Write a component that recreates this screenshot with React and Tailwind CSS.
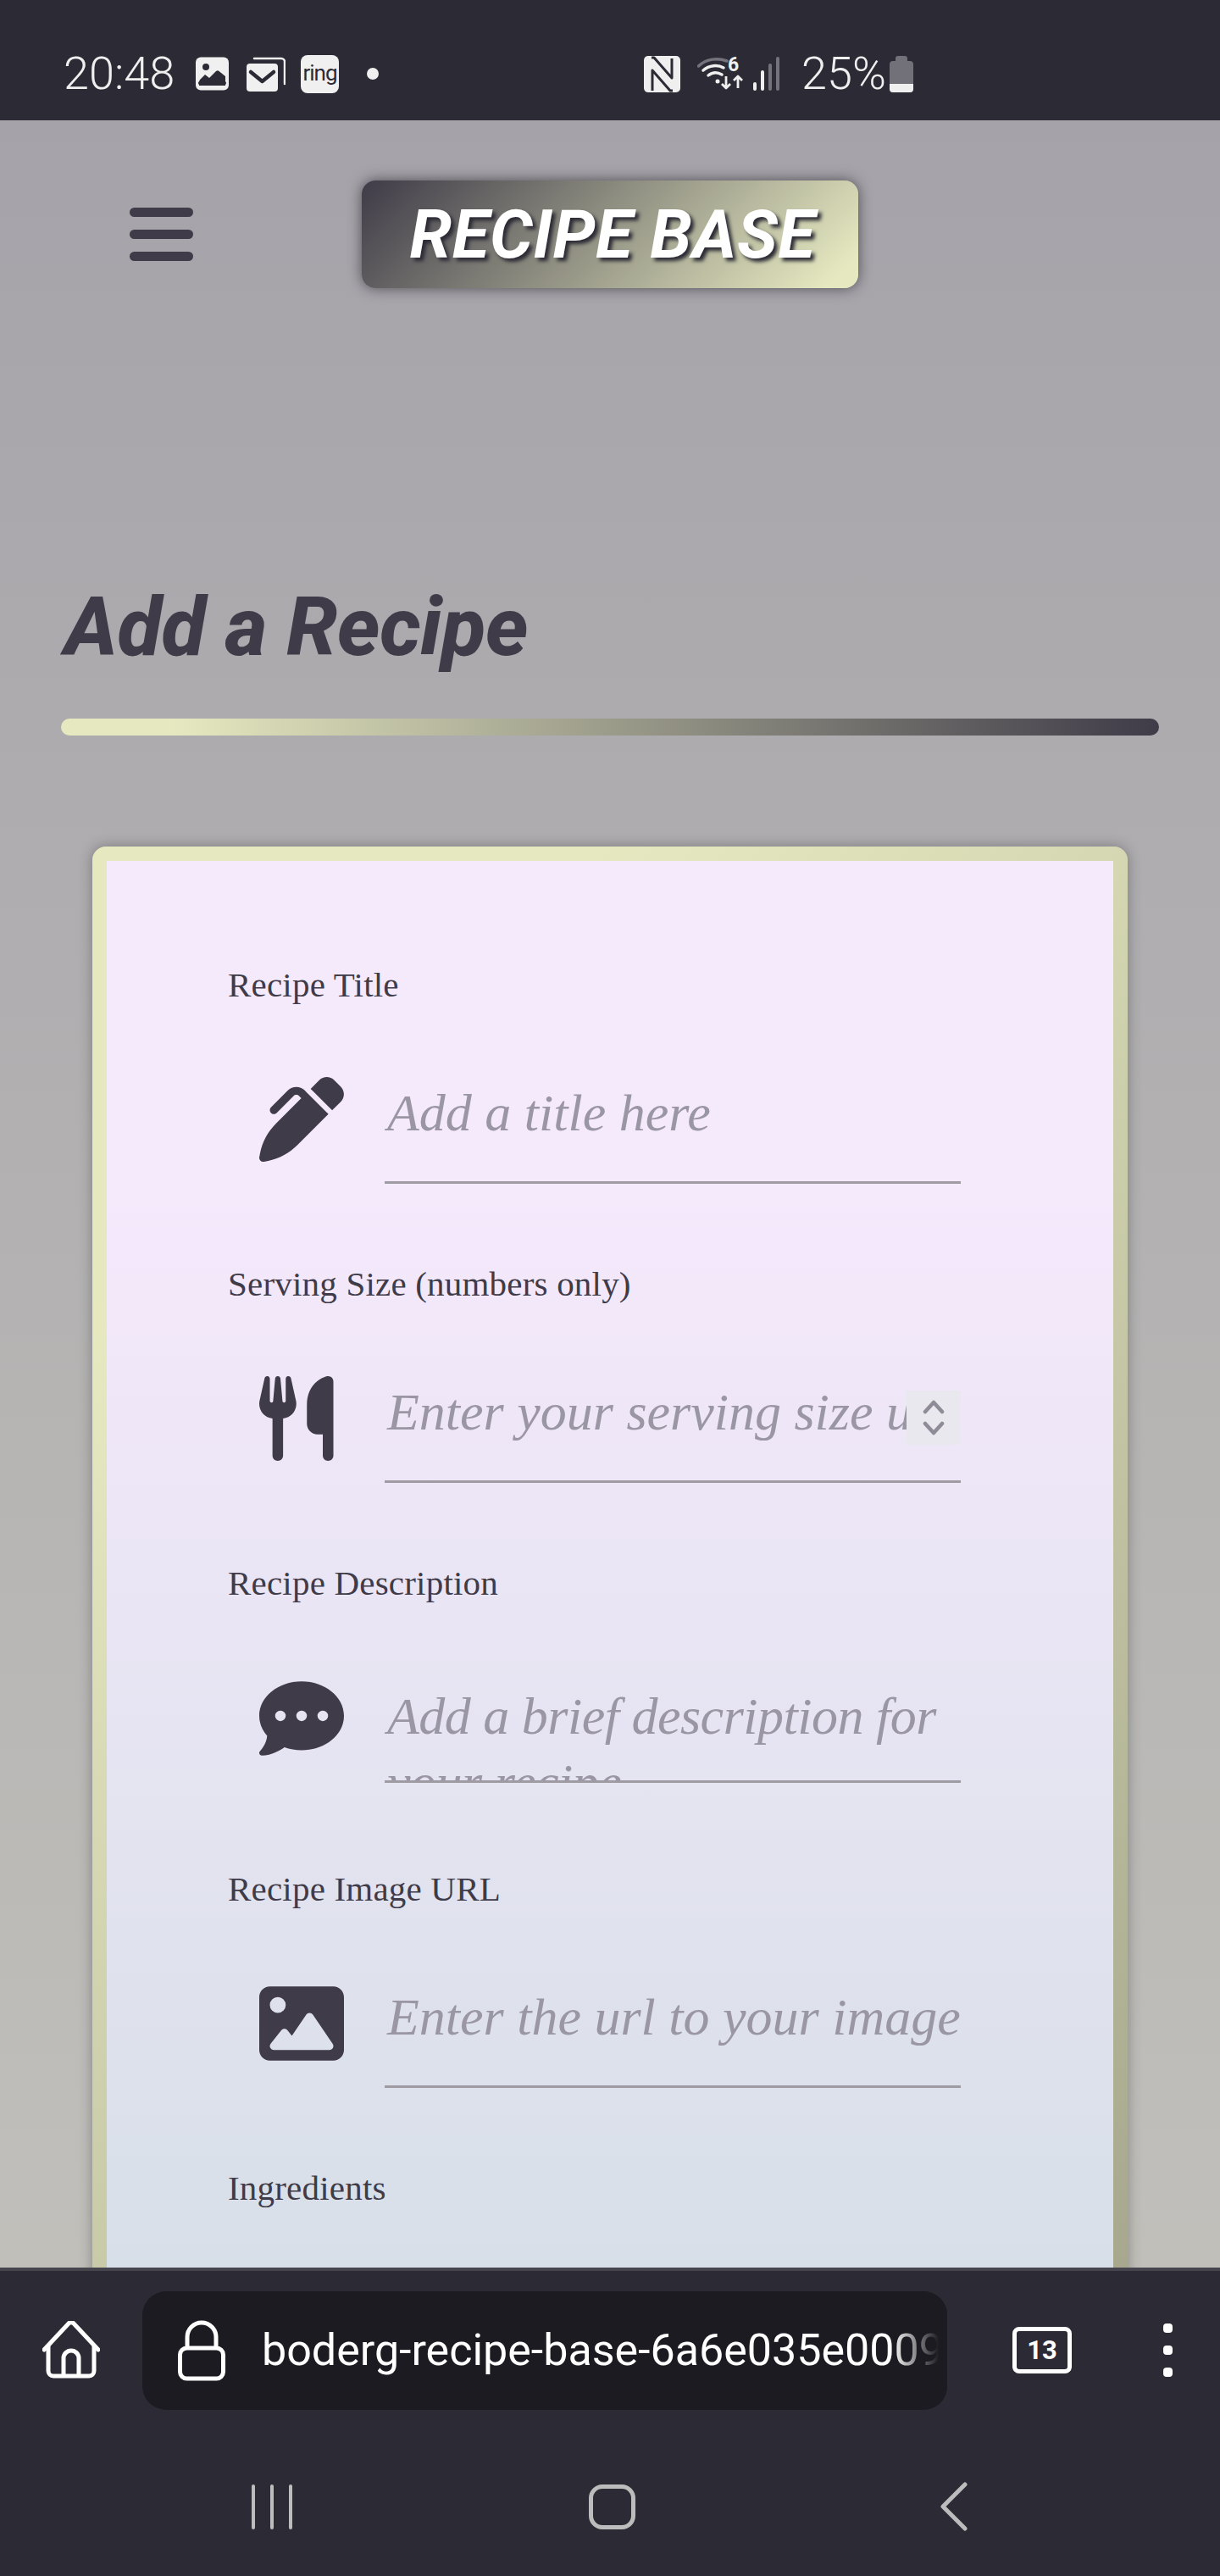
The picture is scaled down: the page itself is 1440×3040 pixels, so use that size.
import React from "react";
import { FaPenClip, FaUtensils, FaCommentDots, FaImage } from "react-icons/fa6";

const INK = "#3f3b48";

function ImageNote() {
  return (
    <svg width="40" height="40" viewBox="0 0 40 40" className="shrink-0">
      <rect width="39" height="39" y="0.5" rx="6" fill="#f0f0f0" />
      <circle cx="12" cy="12" r="4" fill="#2c2b35" />
      <path d="M4 33v-3c0-2 1-3 2-4l5-5 5 4 8-8c1.500-1 2.500-1 3.500 0L35 23v10z" fill="#2c2b35" />
      <rect x="4" y="31" width="31" height="3" fill="#2c2b35" />
      <path d="M5 31h29" stroke="#2c2b35" strokeWidth="4" strokeLinecap="round" />
    </svg>
  );
}

function MailNote() {
  return (
    <svg width="46" height="41" viewBox="0 0 46 41" className="shrink-0">
      <path d="M9 2h32a4 4 0 0 1 4 4v26" fill="none" stroke="#f0f0f0" strokeWidth="2.500" strokeLinecap="round" />
      <rect x="0" y="8" width="37" height="33" rx="4" fill="#f0f0f0" />
      <path d="M5 18l13.500 11L32 18" fill="none" stroke="#2c2b35" strokeWidth="4.500" strokeLinecap="round" strokeLinejoin="round" />
    </svg>
  );
}

function NfcIcon() {
  return (
    <svg width="43" height="43" viewBox="0 0 43 43" className="shrink-0">
      <rect width="43" height="43" rx="5" fill="#efefef" />
      <path d="M9 2h3l21 24V3" fill="none" stroke="#2c2b35" strokeWidth="3" strokeLinejoin="round" />
      <path d="M34 41h-3L10 17v24" fill="none" stroke="#2c2b35" strokeWidth="3" strokeLinejoin="round" />
    </svg>
  );
}

function WifiIcon() {
  return (
    <div className="relative w-[54px] h-[40px] shrink-0">
      <svg width="54" height="40" viewBox="0 0 54 40" className="absolute inset-0">
        <path d="M1.500 11C11 2 24 1 35 5" fill="none" stroke="#74737b" strokeWidth="3.500" strokeLinecap="round" />
        <path d="M7 16c7-6 17-7 24-3" fill="none" stroke="#efefef" strokeWidth="3.500" strokeLinecap="round" />
        <path d="M13 22c5-4 11-4 16-1" fill="none" stroke="#efefef" strokeWidth="3.500" strokeLinecap="round" />
        <circle cx="24" cy="29" r="2.500" fill="#efefef" />
        <path d="M34 23v14m-5-5l5 5 5-5" fill="none" stroke="#efefef" strokeWidth="2.800" strokeLinejoin="round" />
        <path d="M48 37V23m-5 5l5-5 5 5" fill="none" stroke="#efefef" strokeWidth="2.800" strokeLinejoin="round" />
      </svg>
      <span className="absolute left-[36px] top-[-3px] text-[23px] leading-[26px] font-bold text-[#efefef] font-['Roboto',sans-serif]">6</span>
    </div>
  );
}

function SignalIcon() {
  return (
    <div className="flex items-end gap-[5px] h-[40px] shrink-0">
      <div className="w-[4px] h-[10px] rounded-full bg-[#efefef]" />
      <div className="w-[4px] h-[24px] rounded-full bg-[#efefef]" />
      <div className="w-[4px] h-[32px] rounded-full bg-[#74737b]" />
      <div className="w-[4px] h-[40px] rounded-full bg-[#74737b]" />
    </div>
  );
}

function BatteryIcon() {
  return (
    <svg width="28" height="43" viewBox="0 0 28 43" className="shrink-0">
      <path d="M7 6V3a3 3 0 0 1 3-3h8a3 3 0 0 1 3 3v3h3a4 4 0 0 1 4 4v29a4 4 0 0 1-4 4H4a4 4 0 0 1-4-4V10a4 4 0 0 1 4-4z" fill="#72717a" />
      <path d="M0 33h28v6a4 4 0 0 1-4 4H4a4 4 0 0 1-4-4z" fill="#efefef" />
    </svg>
  );
}

function StatusBar() {
  return (
    <div className="h-[142px] shrink-0 bg-[#2c2b35] flex items-center pt-[32px] text-[#efefef] font-['Roboto',sans-serif] font-light">
      <div className="flex items-center pl-[75px]">
        <span className="text-[54px] leading-[60px] w-[156px]">20:48</span>
        <ImageNote />
        <div className="w-[20px]" />
        <MailNote />
        <div className="w-[18px]" />
        <div className="w-[45px] h-[45px] rounded-[8px] bg-[#f0f0f0] flex items-center justify-center text-[#2c2b35] text-[26px] leading-none font-normal tracking-[-1px] pb-[3px]">ring</div>
        <div className="w-[14px] h-[14px] rounded-full bg-[#f0f0f0] ml-[33px]" />
      </div>
      <div className="flex items-center ml-[313px]">
        <NfcIcon />
        <div className="w-[20px]" />
        <WifiIcon />
        <div className="w-[12px]" />
        <SignalIcon />
        <span className="text-[54px] leading-[60px] ml-[26px] w-[104px]">25%</span>
        <BatteryIcon />
      </div>
    </div>
  );
}

function Label({ children }) {
  return <div className="text-[41px] leading-[48px] tracking-[0.2px] text-[#3f3b48] font-['Liberation_Serif',serif]">{children}</div>;
}

function Field({ label, icon: Icon, placeholder, extra, mb, height = "h-[211px]", multi }) {
  return (
    <div className={mb}>
      <Label>{label}</Label>
      <div className={`flex items-end ${height} pl-[37px]`}>
        <div className="w-[148px] shrink-0 pb-[26px]">
          <Icon size={100} color={INK} preserveAspectRatio="xMinYMid meet" />
        </div>
        <div className={`relative flex-1 min-w-0 overflow-hidden border-b-[3px] border-[#9f9ba3] ${multi ? "h-[118px]" : "h-[119px]"}`}>
          {multi ? (
            <div className="pl-[3px] text-[62px] leading-[78px] tracking-[-0.5px] italic text-[#9a96a4] font-['Liberation_Serif',serif]">{placeholder}</div>
          ) : (
            <div className="pl-[3px] text-[62px] leading-[70px] italic text-[#9a96a4] font-['Liberation_Serif',serif] whitespace-nowrap">{placeholder}</div>
          )}
          {extra}
        </div>
      </div>
    </div>
  );
}

function Spinner() {
  return (
    <div className="absolute right-0 top-[10px] w-[64px] h-[64px] bg-[#e9e8ef] flex items-center justify-center">
      <svg width="26" height="46" viewBox="0 0 26 46" fill="none" stroke="#8f8c98" strokeWidth="4.500" strokeLinecap="round" strokeLinejoin="round">
        <path d="M3 16L13 5l10 11" />
        <path d="M3 30l10 11 10-11" />
      </svg>
    </div>
  );
}

function Main() {
  return (
    <main className="flex-1 min-h-0 overflow-hidden bg-[linear-gradient(180deg,#a5a3a9,#c0bfba)]">
      <header className="flex items-center pt-[71px] pl-[153px]">
        <div className="flex flex-col gap-[15px] w-[75px] shrink-0">
          <div className="h-[11px] rounded-full bg-[#3f3b48]" />
          <div className="h-[11px] rounded-full bg-[#3f3b48]" />
          <div className="h-[11px] rounded-full bg-[#3f3b48]" />
        </div>
        <div className="ml-[199px] w-[586px] h-[127px] rounded-[16px] pl-[6px] bg-[linear-gradient(135deg,#3f3b48_0%,#e6e9c0_95%)] shadow-[0_0_16px_rgba(30,28,36,0.65)] flex items-center justify-center">
          <span className="text-[80px] leading-none font-bold italic text-white tracking-[0.5px] font-['Roboto',sans-serif] [text-shadow:4px_4px_4px_#2c2b35]">RECIPE BASE</span>
        </div>
      </header>
      <h1 className="mt-[344px] ml-[76px] text-[96px] leading-[112px] font-extrabold italic text-[#3f3b48] tracking-[-0.4px] font-['Roboto',sans-serif]">Add a Recipe</h1>
      <div className="mx-[72px] mt-[52px] h-[20px] rounded-full bg-[linear-gradient(90deg,#e6e9c0_10%,#3f3b48_100%)]" />
      <section className="mx-[109px] mt-[131px] h-[1700px] rounded-[16px] p-[17px] bg-[linear-gradient(135deg,#e6e9c0_20%,#a6a78d_100%)] shadow-[0_0_16px_rgba(0,0,0,0.3)]">
        <form className="h-full bg-[linear-gradient(180deg,#f5e9fc_23%,#d7dfe8_100%)] pt-[122px] pl-[143px] pr-[180px]">
          <Field label="Recipe Title" icon={FaPenClip} placeholder="Add a title here" mb="mb-[94px]" />
          <Field label="Serving Size (numbers only)" icon={FaUtensils} placeholder="Enter your serving size using numbers" mb="mb-[94px]" extra={<Spinner />} />
          <Field label="Recipe Description" icon={FaCommentDots} placeholder="Add a brief description for your recipe" mb="mb-[101px]" height="h-[212px]" multi />
          <Field label="Recipe Image URL" icon={FaImage} placeholder="Enter the url to your image" mb="mb-[94px]" />
          <Label>Ingredients</Label>
        </form>
      </section>
    </main>
  );
}

function BrowserBar() {
  return (
    <footer className="h-[364px] shrink-0 bg-[#2c2b35] border-t-[4px] border-[#46454e]">
      <div className="flex items-start pt-[24px] h-[164px]">
        <svg width="68" height="68" viewBox="0 0 68 68" fill="none" stroke="#fff" strokeWidth="5" strokeLinecap="round" strokeLinejoin="round" className="ml-[50px] mt-[35px] shrink-0">
          <path d="M2 34L31 3a4 4 0 0 1 6 0l29 31" />
          <path d="M7 30v29a6 6 0 0 0 6 6h42a6 6 0 0 0 6-6V30" />
          <path d="M25 64V44a9 9 0 0 1 18 0v20" />
        </svg>
        <div className="ml-[50px] w-[950px] h-[140px] rounded-[28px] bg-[#1c1b21] flex items-center shrink-0 relative overflow-hidden">
          <svg width="56" height="72" viewBox="0 0 56 72" fill="none" stroke="#fff" strokeWidth="5" strokeLinejoin="round" className="ml-[42px] shrink-0">
            <rect x="2.500" y="33" width="51" height="36" rx="8" />
            <path d="M11 33V20a17 17 0 0 1 34 0v13" />
          </svg>
          <span className="ml-[43px] text-[52px] leading-[64px] text-white whitespace-nowrap font-['Roboto',sans-serif]">boderg-recipe-base-6a6e035e0009</span>
          <div className="absolute right-0 top-0 bottom-0 w-[66px] bg-[linear-gradient(90deg,rgba(28,27,33,0),#1c1b21_85%)]" />
        </div>
        <div className="ml-[77px] mt-[42px] w-[70px] h-[55px] rounded-[8px] border-[5px] border-white flex items-center justify-center text-white text-[31px] leading-none font-bold font-['Roboto',sans-serif] shrink-0">13</div>
        <div className="ml-[108px] mt-[38px] flex flex-col gap-[15px] shrink-0">
          <div className="w-[11px] h-[11px] rounded-[4px] bg-white" />
          <div className="w-[11px] h-[11px] rounded-[4px] bg-white" />
          <div className="w-[11px] h-[11px] rounded-[4px] bg-white" />
        </div>
      </div>
      <nav className="flex items-center h-[196px] pt-[32px]">
        <div className="ml-[297px] flex gap-[18px] shrink-0">
          <div className="w-[4px] h-[53px] rounded-full bg-[#bcbcbc]" />
          <div className="w-[4px] h-[53px] rounded-full bg-[#bcbcbc]" />
          <div className="w-[4px] h-[53px] rounded-full bg-[#bcbcbc]" />
        </div>
        <div className="ml-[350px] w-[55px] h-[53px] rounded-[16px] border-[5px] border-[#bcbcbc] shrink-0" />
        <svg width="32" height="58" viewBox="0 0 32 58" fill="none" stroke="#bcbcbc" strokeWidth="5" strokeLinecap="round" strokeLinejoin="round" className="ml-[360px] shrink-0">
          <path d="M29 3L3 29l26 26" />
        </svg>
      </nav>
    </footer>
  );
}

export default function App() {
  return (
    <div className="w-[1440px] h-[3040px] flex flex-col overflow-hidden">
      <StatusBar />
      <Main />
      <BrowserBar />
    </div>
  );
}
